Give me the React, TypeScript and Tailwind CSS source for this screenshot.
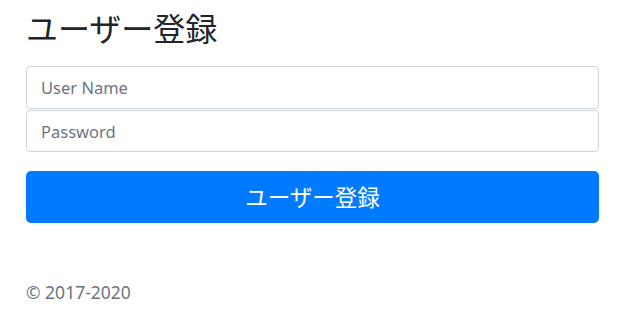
export default function App() {
  const font = { fontFamily: '"Noto Sans", "Noto Sans CJK JP", sans-serif' };
  return (
    <div className="min-h-screen bg-white pl-[26px] pr-[28px] pt-[10px] text-[#212529]" style={font}>
      <h2 className="mb-[18px] text-[32px] leading-[1.2] font-normal">ユーザー登録</h2>
      <form className="flex flex-col" onSubmit={(e) => e.preventDefault()}>
        <input
          type="text"
          placeholder="User Name"
          className="h-[43px] w-full rounded-[4px] border border-[#ced4da] px-[14px] text-[16.5px] text-[#495057] placeholder:text-[#6c757d] focus:outline-none"
        />
        <input
          type="password"
          placeholder="Password"
          className="mt-px h-[42px] w-full rounded-[4px] border border-[#ced4da] px-[14px] text-[16.5px] text-[#495057] placeholder:text-[#6c757d] focus:outline-none"
        />
        <button
          type="submit"
          className="mt-[19px] h-[52px] w-full rounded-[5px] bg-[#007bff] text-[22.5px] text-white"
        >
          ユーザー登録
        </button>
      </form>
      <p className="mt-[56px] text-[17.5px] leading-[1.5] text-[#6c757d]">© 2017-2020</p>
    </div>
  );
}
